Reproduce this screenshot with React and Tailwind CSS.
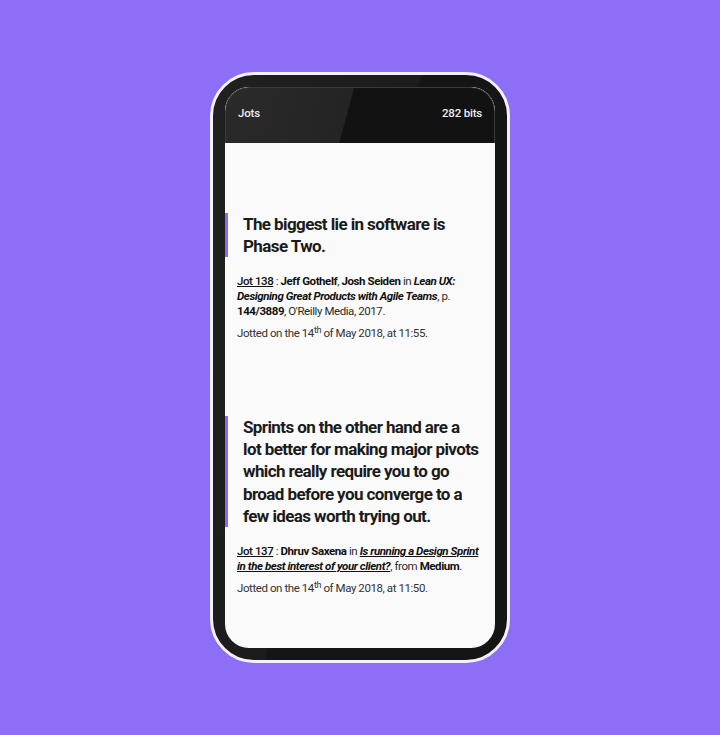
export default function App() {
  const font = { fontFamily: "Roboto, 'Liberation Sans', sans-serif" };
  return (
    <div className="w-full h-[735px] bg-[#8d6ef7] flex items-center justify-center" style={font}>
      <div className="w-[300px] h-[591px] rounded-[44px] border-[3px] border-[#f4f1ff] bg-[linear-gradient(105deg,#202020_0%,#1c1c1c_46%,#151515_46.5%)] p-[12px]">
        <div className="h-full rounded-[24px] overflow-hidden bg-[#fafafa] flex flex-col">
          <div className="h-[56px] shrink-0 rounded-t-[24px] border-t border-x border-[#3a3a3a] bg-[linear-gradient(105deg,#2a2a2a_0%,#242424_45%,#121212_45.5%)] flex items-start justify-between px-[12px] pt-[17px] text-[11.5px] font-medium text-[#ececec] tracking-[-0.2px]">
            <span>Jots</span>
            <span>282 bits</span>
          </div>
          <div className="flex-1 text-[#1b1b1b]">
            <div className="pt-[70px]">
              <div className="border-l-[3px] border-[#8b6cf0] pl-[15px] pr-[8px] text-[17px] leading-[22px] font-bold tracking-[-0.6px]">
                The biggest lie in software is Phase Two.
              </div>
              <div className="pl-[12px] pr-[10px] mt-[17px] text-[11.5px] leading-[15px] tracking-[-0.42px] text-[#2a2a2a]">
                <span className="underline font-medium text-[#111]">Jot 138</span> : <b className="font-bold text-[#111]">Jeff Gothelf</b>, <b className="font-bold text-[#111]">Josh Seiden</b> in <b className="font-bold italic text-[#111]">Lean UX: Designing Great Products with Agile Teams</b>, p. <b className="font-bold text-[#111]">144/3889</b>, O'Reilly Media, 2017.
              </div>
              <div className="pl-[12px] mt-[7px] text-[11.5px] leading-[15px] tracking-[-0.42px] text-[#333]">
                Jotted on the 14<sup className="text-[9px]">th</sup> of May 2018, at 11:55.
              </div>
            </div>
            <div className="pt-[75px]">
              <div className="border-l-[3px] border-[#8b6cf0] pl-[15px] pr-[6px] text-[17px] leading-[22.2px] font-bold tracking-[-0.6px]">
                Sprints on the other hand are a<br />lot better for making major pivots which really require you to go broad before you converge to a few ideas worth trying out.
              </div>
              <div className="pl-[12px] pr-[10px] mt-[17px] text-[11.5px] leading-[15px] tracking-[-0.42px] text-[#2a2a2a]">
                <span className="underline font-medium text-[#111]">Jot 137</span> : <b className="font-bold text-[#111]">Dhruv Saxena</b> in <b className="font-bold italic underline text-[#111]">Is running a Design Sprint in the best interest of your client?</b>, from <b className="font-bold text-[#111]">Medium</b>.
              </div>
              <div className="pl-[12px] mt-[7px] text-[11.5px] leading-[15px] tracking-[-0.42px] text-[#333]">
                Jotted on the 14<sup className="text-[9px]">th</sup> of May 2018, at 11:50.
              </div>
            </div>
          </div>
        </div>
      </div>
    </div>
  );
}
